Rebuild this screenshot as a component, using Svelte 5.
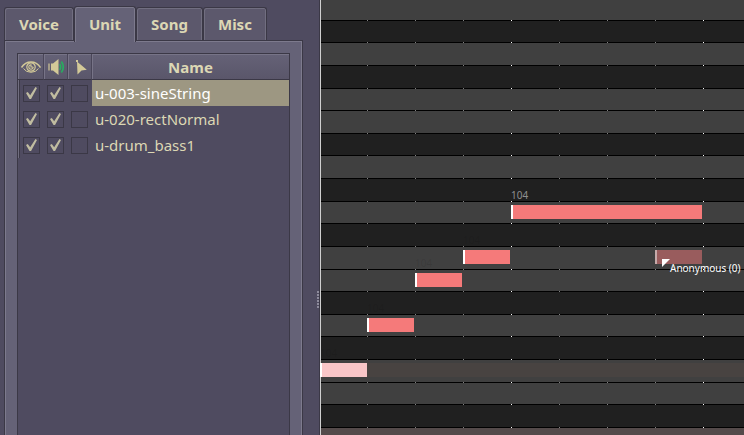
<script>
  const tabs = ['Voice', 'Unit', 'Song', 'Misc'];
  let active = $state('Unit');
  let selected = $state(0);
  let units = $state([
    { name: 'u-003-sineString', visible: true, audible: true, marked: false },
    { name: 'u-020-rectNormal', visible: true, audible: true, marked: false },
    { name: 'u-drum_bass1', visible: true, audible: true, marked: false }
  ]);
  const toggles = [
    ['visible', 'Show'],
    ['audible', 'Play'],
    ['marked', 'Select']
  ];

  // Key rows from top to bottom; each entry of lines is the position of the line under a row.
  const keys = 'LDLDLLDLDLDLLDLDLLDT'.split('');
  const lines = [20, 42, 65, 88, 110, 133, 155, 178, 201, 223, 246, 269, 291, 314, 336, 359, 382, 404, 427, 450];
  const rows = keys.map((k, i) => ({ k, h: i === 0 ? 21 : lines[i] - lines[i - 1] }));

  const notes = [
    { x: 191, y: 205, w: 191, label: '104', kind: 'lit' },
    { x: 143, y: 250, w: 47, label: '104', kind: '' },
    { x: 95, y: 273, w: 47, label: '104', kind: '' },
    { x: 47, y: 318, w: 47, label: '104', kind: '' },
    { x: 0, y: 363, w: 47, label: '104', kind: 'playing' },
    { x: 335, y: 250, w: 47, label: '', kind: 'ghost' }
  ];
</script>

<main>
  <aside>
    <div class="tabs" role="tablist">
      {#each tabs as t}
        <button role="tab" aria-selected={active === t} class:active={active === t} onclick={() => (active = t)}>{t}</button>
      {/each}
    </div>
    <section class="panel">
      <div class="list">
        <table>
          <thead>
            <tr>
              <th class="icon" aria-label="Visible">
                <svg width="21" height="16" viewBox="0 0 21 16" fill="none" stroke="#d3c998">
                  <path d="M1.500 8.500Q5 3 11 3T20.500 8.500" stroke-width="1.500" />
                  <path d="M3.500 9.500Q6 13.300 11 13.300T18.500 9.500" stroke-width="1" />
                  <circle cx="11" cy="8" r="4.200" stroke-width="1.200" />
                  <path d="M13.200 8a2.200 2.200 0 1 1-2.200-2.200V8h2.200" stroke-width="1.100" />
                </svg>
              </th>
              <th class="icon" aria-label="Audible">
                <svg width="18" height="18" viewBox="0 0 18 18">
                  <path d="M2 5.500v7" stroke="#d3c998" stroke-width="1.200" />
                  <path d="M4 5.500h2L11.500 1v16L6 12.500H4z" fill="#d3c998" />
                  <path d="M12.800 6q1.600 3 0 6M14.300 3.500q4 5.500 0 11" fill="none" stroke="#27ae60" stroke-width="1.700" />
                </svg>
              </th>
              <th class="icon" aria-label="Selected">
                <svg width="16" height="16" viewBox="0 0 16 16" fill="#d3c998">
                  <path d="M4 1h2v2H4zM5 2.500L14.800 10.800 9.500 11.500 5.500 15.500z" />
                </svg>
              </th>
              <th class="name">Name</th>
            </tr>
          </thead>
          <tbody>
            {#each units as u, i}
              <tr class:selected={selected === i} onclick={() => (selected = i)}>
                {#each toggles as [key, verb]}
                  <td class="tick"><input type="checkbox" aria-label="{verb} {u.name}" bind:checked={u[key]} /></td>
                {/each}
                <td class="unit">{u.name}</td>
              </tr>
            {/each}
          </tbody>
        </table>
      </div>
    </section>
    <div class="grip"></div>
  </aside>

  <div class="roll">
    {#each rows as r}
      <div class="row {r.k}" style="height:{r.h}px"></div>
    {/each}
    <div class="track"></div>
    {#each notes as n}
      <div class="note {n.kind}" style="left:{n.x}px;top:{n.y}px;width:{n.w}px">
        {#if n.label}<span>{n.label}</span>{/if}
      </div>
    {/each}
    <div class="user">
      <svg width="8" height="8" viewBox="0 0 8 8"><path d="M0 0h8L0 8z" fill="#fff" /></svg>
      <span>Anonymous (0)</span>
    </div>
  </div>
</main>

<style>
  :global(body) {
    margin: 0;
    background: #4f4b60;
  }
  main {
    display: grid;
    grid-template-columns: 320px 1fr;
    height: 100vh;
    overflow: hidden;
    font: 15px/20px 'Noto Sans', sans-serif;
    color: #dcd7b4;
  }
  aside {
    position: relative;
    display: flex;
    flex-direction: column;
    box-sizing: border-box;
    min-height: 0;
    padding: 6px 16px 0 4px;
    background: #4f4b60;
    border-right: 1px solid #3b3846;
  }
  .tabs {
    display: flex;
    align-items: flex-end;
    height: 34px;
  }
  .tabs button {
    box-sizing: border-box;
    height: 33px;
    padding: 0 14px;
    border: 1px solid #3b3846;
    border-bottom: 0;
    border-radius: 3px 3px 0 0;
    background: #5c586c;
    box-shadow: inset 1px 1px #716e80, inset -1px 0 #716e80;
    color: inherit;
    font: bold 15px/20px 'Noto Sans', sans-serif;
  }
  .tabs button.active {
    position: relative;
    height: 36px;
    margin-bottom: -2px;
    padding-bottom: 1px;
    background: #656277;
    box-shadow: inset 1px 1px #7d7a8d, inset -1px 0 #7d7a8d;
  }
  .panel {
    flex: 1;
    padding: 12px 12px 0;
    border: 1px solid #3b3846;
    border-bottom: 0;
    background: #656277;
    box-shadow: inset 1px 1px #7d7a8d, inset -1px 0 #7d7a8d;
  }
  .list {
    box-sizing: border-box;
    height: 100%;
    border: 1px solid #3b3846;
    border-bottom: 0;
    background: #4f4b60;
  }
  table {
    width: 100%;
    table-layout: fixed;
    border-collapse: separate;
    border-spacing: 0;
  }
  th {
    box-sizing: border-box;
    height: 26px;
    padding: 0;
    border-bottom: 1px solid #3b3846;
    background: linear-gradient(#656277, #5a566a);
    box-shadow: inset 1px 1px #777487;
  }
  .icon {
    width: 24px;
    border-right: 1px solid #4a4659;
  }
  .icon:first-child {
    width: 26px;
  }
  .icon svg {
    display: block;
    margin: 1px auto 0;
  }
  td {
    height: 26px;
    padding: 0;
  }
  .tick:first-child {
    padding-left: 1px;
    border-left: 1px solid #716e80;
    box-shadow: inset 1px 0 #3b3846;
  }
  input {
    appearance: none;
    display: grid;
    place-content: center;
    box-sizing: border-box;
    width: 17px;
    height: 17px;
    margin: 0 0 0 3px;
    border: 1px solid #3b3846;
  }
  input:checked::before {
    content: '';
    width: 11px;
    height: 12px;
    background: #c0bca0;
    clip-path: polygon(0 50%, 16% 42%, 38% 68%, 86% 0, 100% 8%, 46% 100%, 32% 100%);
  }
  .unit {
    padding-left: 3px;
  }
  .selected .unit {
    background: #9d9782;
    color: #fff;
  }
  .grip {
    position: absolute;
    right: 0;
    top: 291px;
    width: 2px;
    height: 17px;
    background: repeating-linear-gradient(#8e8b9c 0 2px, transparent 2px 3px);
  }
  .roll {
    position: relative;
    min-width: 0;
    overflow: hidden;
  }
  .row {
    box-sizing: border-box;
    border-bottom: 1px solid #000;
    background: #404040;
    position: relative;
  }
  .row::after {
    content: '';
    position: absolute;
    inset: auto 0 -1px 0;
    height: 1px;
    background:
      repeating-linear-gradient(90deg, transparent 0 191px, #fff 191px 192px),
      repeating-linear-gradient(90deg, transparent 0 47px, #808080 47px 48px);
  }
  .D {
    background: #202020;
  }
  .T {
    background: #544a4a;
  }
  .roll::before {
    content: '';
    position: absolute;
    z-index: 1;
    inset: 0 auto 0 0;
    width: 1px;
    background: #d0d0d0;
  }
  .track {
    position: absolute;
    top: 363px;
    left: 1px;
    right: 0;
    height: 14px;
    background: #484341;
  }
  .note {
    position: absolute;
    z-index: 2;
    box-sizing: border-box;
    height: 14px;
    border-left: 2px solid #fff;
    background: #f57a7a;
  }
  .note span {
    position: absolute;
    left: -2px;
    bottom: 17px;
    font-size: 10px;
    line-height: 14px;
    color: rgba(0, 0, 0, 0.1);
  }
  .note.lit span {
    color: #8f8f8f;
  }
  .playing {
    background: #f9c6c8;
  }
  .ghost {
    background: #995c5d;
    border-color: #c5aaaa;
  }
  .user {
    position: absolute;
    z-index: 3;
    left: 342px;
    top: 259px;
    display: flex;
    color: #fff;
    font-size: 10px;
    line-height: 14px;
    white-space: nowrap;
  }
  .user span {
    padding-top: 2px;
  }
</style>
